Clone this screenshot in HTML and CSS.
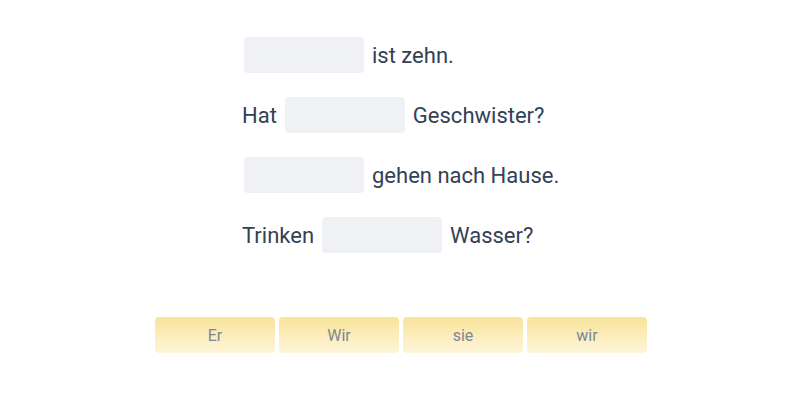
FILE: index.html
```html
<!DOCTYPE html>
<html>
<head>
<meta charset="utf-8">
<link rel="stylesheet" href="styles.css">
</head>
<body>
<div class="page">
  <div class="sentences">
    <div class="row"><span class="blank"></span><span class="word">ist zehn.</span></div>
    <div class="row"><span class="word">Hat</span><span class="blank"></span><span class="word">Geschwister?</span></div>
    <div class="row"><span class="blank"></span><span class="word">gehen nach Hause.</span></div>
    <div class="row"><span class="word">Trinken</span><span class="blank"></span><span class="word">Wasser?</span></div>
  </div>
  <div class="options">
    <button class="opt">Er</button>
    <button class="opt">Wir</button>
    <button class="opt">sie</button>
    <button class="opt">wir</button>
  </div>
</div>
</body>
</html>
```
FILE: styles.css
```css
html, body {
  margin: 0;
  padding: 0;
  background: #ffffff;
}
body {
  font-family: Roboto, "Liberation Sans", sans-serif;
  width: 800px;
  height: 400px;
}
.page {
  display: flex;
  flex-direction: column;
  align-items: center;
  padding-top: 37px;
  padding-left: 2px;
}
.sentences {
  display: flex;
  flex-direction: column;
  gap: 24px;
  width: 320px;
  padding-left: 2px;
}
.row {
  display: flex;
  align-items: center;
  gap: 8px;
  height: 36px;
  font-size: 22px;
  color: #334155;
}
.blank {
  width: 120px;
  height: 36px;
  border-radius: 4px;
  background: #f0f1f5;
}
.blank:first-child {
  margin-left: 2px;
}
.options {
  display: flex;
  gap: 4px;
  margin-top: 64px;
}
.opt {
  width: 120px;
  height: 36px;
  border: none;
  border-radius: 4px;
  background: linear-gradient(to bottom, #f9e499, #fef6da);
  color: #7b8696;
  font-family: Roboto, "Liberation Sans", sans-serif;
  font-size: 16px;
  padding: 0;
  margin: 0;
}
```
